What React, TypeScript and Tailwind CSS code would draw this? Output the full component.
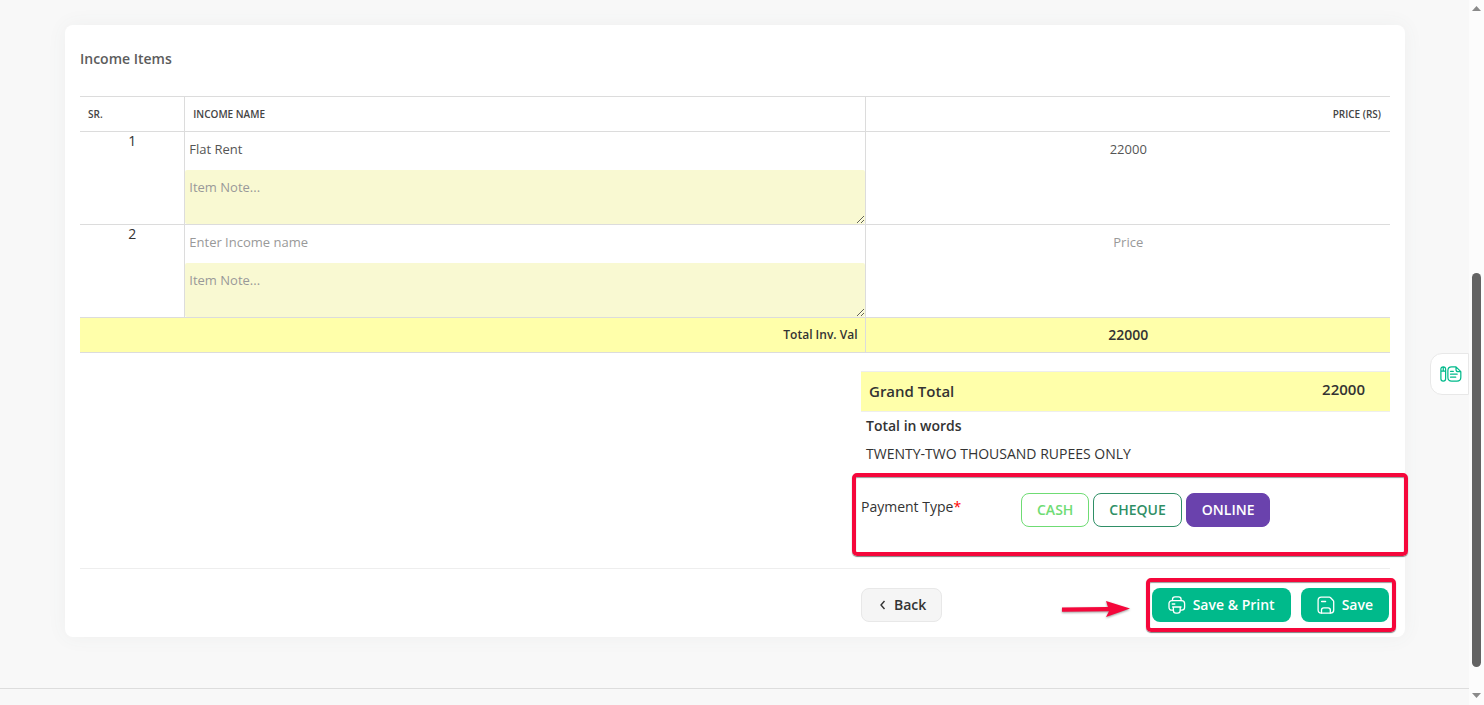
import React, { useState } from 'react';
import clsx from 'clsx';

interface IncomeItem {
  id: number;
  name: string;
  note: string;
  price: string;
}

const PAYMENT_TYPES = [
  { id: 'CASH', outline: 'border-[#6fdc74] text-[#6fdc74]' },
  { id: 'CHEQUE', outline: 'border-[#2f8f66] text-[#2f8f66]' },
  { id: 'ONLINE', outline: 'border-[#6a42ad] text-[#6a42ad]' },
];

function PrintIcon() {
  return (
    <svg width="18" height="18" viewBox="0 0 18 18" fill="none" stroke="currentColor" strokeWidth="1.3" strokeLinecap="round" strokeLinejoin="round" aria-hidden="true">
      <path d="M4.500 4.600V3.400C4.500 1.800 5.400.8 7 .8h3.600c1.600 0 2.500 1 2.500 2.600v1.200" />
      <path d="M5.200 14.200H4C2.100 14.200 1 13.200 1 11.300V7.600c0-1.900 1.100-2.900 3-2.900h9.600c1.900 0 3 1 3 2.900v3.700c0 1.900-1.100 2.900-3 2.900h-1.200" />
      <path d="M4.600 11h8.400M5.400 11v3.600c0 1.700.9 2.600 2.600 2.600h1.600c1.700 0 2.600-.9 2.600-2.600V11M4.200 8h2.600" />
    </svg>
  );
}

function SaveIcon() {
  return (
    <svg width="18" height="18" viewBox="0 0 18 18" fill="none" stroke="currentColor" strokeWidth="1.3" strokeLinecap="round" strokeLinejoin="round" aria-hidden="true">
      <path d="M4.200 1.200h8.200c.5 0 .9.200 1.200.5l2.600 2.800c.3.300.5.700.5 1.200V14c0 2-1.100 3.100-3.100 3.100H4.200c-2 0-3.100-1.100-3.100-3.100V4.300c0-2 1.100-3.100 3.100-3.100z" />
      <path d="M4.500 17v-3c0-1.500.8-2.200 2.200-2.200h4.400c1.400 0 2.200.7 2.200 2.200v3M4.600 5.500h4" />
    </svg>
  );
}

function NotesIcon() {
  return (
    <svg width="22" height="17" viewBox="0 0 23 18" fill="none" stroke="currentColor" strokeWidth="1.3" strokeLinecap="round" strokeLinejoin="round" aria-hidden="true">
      <path d="M.8 3.400C.8 1.800 1.700.9 3.300.9s2.500.9 2.500 2.500v10.200c0 1.600-.9 2.500-2.500 2.500S.8 15.200.8 13.600zM.8 5.400h5M3.300 1v4.400" />
      <path d="M16.800.9h-4.600C9.400.9 8.200 2.100 8.200 5v7c0 2.900 1.200 4.100 4 4.100h5.600c2.900 0 4.100-1.200 4.100-4.100V6zM16.800.9v2.700c0 1.700.7 2.400 2.400 2.400h2.700M11 5.600h3M11 8.700h7M11 11.800h5.500" />
    </svg>
  );
}

// Callout frame drawn over the area it belongs to
function Highlight({ className }: { className: string }) {
  return <div className={clsx('pointer-events-none absolute rounded-[5px] border-4 border-[#f5073b] shadow-[0_1px_1px_rgba(0,0,0,0.5),inset_0_1px_1px_rgba(0,0,0,0.4)]', className)} />;
}

function ItemRow({ item, onChange }: { key?: React.Key; item: IncomeItem; onChange: (patch: Partial<IncomeItem>) => void }) {
  return (
    <tr className="border-b border-[#dcdcdc] align-top">
      <td className="border-r border-[#dcdcdc] text-center text-sm leading-[18px] text-[#333]">{item.id}</td>
      <td className="border-r border-[#dcdcdc]">
        <input
          type="text"
          aria-label="Income name"
          value={item.name}
          onChange={(e) => onChange({ name: e.target.value })}
          placeholder="Enter Income name"
          className="block h-[38px] w-full px-1 pb-1 text-[13px] text-[#555] placeholder:text-[#999] focus:outline-none"
        />
        <textarea
          aria-label="Item note"
          value={item.note}
          onChange={(e) => onChange({ note: e.target.value })}
          placeholder="Item Note..."
          className="block h-[54px] w-full resize-y rounded-xs bg-[#f9f9d2] px-1 py-[7px] text-[13px] leading-5 text-[#555] placeholder:text-[#999] focus:outline-none"
        />
      </td>
      <td>
        <input
          type="text"
          aria-label="Price"
          value={item.price}
          onChange={(e) => onChange({ price: e.target.value })}
          placeholder="Price"
          className="block h-[38px] w-full px-1 pb-1 text-center text-[13px] text-[#555] placeholder:text-[#999] focus:outline-none"
        />
      </td>
    </tr>
  );
}

export default function App() {
  const [items, setItems] = useState<IncomeItem[]>([
    { id: 1, name: 'Flat Rent', note: '', price: '22000' },
    { id: 2, name: '', note: '', price: '' },
  ]);
  const [paymentType, setPaymentType] = useState('ONLINE');

  const total = items.reduce((sum, item) => sum + (Number(item.price) || 0), 0);

  const updateItem = (id: number, patch: Partial<IncomeItem>) => {
    setItems(items.map(item => (item.id === id ? { ...item, ...patch } : item)));
  };

  return (
    <div className="flex min-h-screen bg-[#f8f8f8] font-['Open_Sans',sans-serif] text-[#333]">
      <main className="flex min-w-0 flex-1 flex-col pt-[25px]">
        <section className="mr-16 ml-[65px] rounded-lg bg-white p-[15px] shadow-[0_0_20px_rgba(80,110,100,0.06)]">
          <h2 className="mb-[19px] text-sm leading-[37px] font-semibold text-[#5c5c5c]">Income Items</h2>

          <table className="w-full table-fixed border-collapse">
            <thead>
              <tr className="h-[35px] border-y border-[#dcdcdc] text-[10px] text-[#444]">
                <th className="w-[8%] border-r border-[#dcdcdc] px-2 text-left font-semibold">SR.</th>
                <th className="w-[52%] border-r border-[#dcdcdc] px-2 text-left font-semibold">INCOME NAME</th>
                <th className="w-[40%] px-[9px] text-right font-semibold">PRICE (RS)</th>
              </tr>
            </thead>
            <tbody>
              {items.map(item => (
                <ItemRow key={item.id} item={item} onChange={(patch) => updateItem(item.id, patch)} />
              ))}
            </tbody>
            <tfoot>
              <tr className="h-[35px] border-b border-[#dcdcdc] bg-[#ffffaa]">
                <td colSpan={2} className="border-r border-[#dcdcdc] px-2 text-right text-xs font-semibold">Total Inv. Val</td>
                <td className="text-center text-sm font-semibold">{total}</td>
              </tr>
            </tfoot>
          </table>

          <div className="mt-[18px] ml-auto w-[529px] max-w-full">
            <div className="flex h-[41px] items-center justify-between border-y border-[#eee] bg-[#ffffaa] pr-[25px] pl-2 text-[15px] font-semibold">
              <span>Grand Total</span>
              <span className="pb-1">{total}</span>
            </div>
            <div className="px-[5px] text-sm leading-7">
              <p className="font-semibold">Total in words</p>
              <p>TWENTY-TWO THOUSAND RUPEES ONLY</p>
            </div>
            <div className="relative flex items-start pt-[25px] pb-[41px] text-sm">
              <span id="payment-type" className="w-40 leading-7">
                Payment Type<span className="text-[#f00]">*</span>
              </span>
              <div role="group" aria-labelledby="payment-type" className="flex gap-1">
                {PAYMENT_TYPES.map(type => (
                  <button
                    key={type.id}
                    type="button"
                    aria-pressed={paymentType === type.id}
                    onClick={() => setPaymentType(type.id)}
                    className={clsx(
                      'h-[34px] rounded-lg border px-[15px] font-semibold',
                      paymentType === type.id ? 'border-[#6a42ad] bg-[#6a42ad] text-white' : type.outline
                    )}
                  >
                    {type.id}
                  </button>
                ))}
              </div>
              <Highlight className="top-[5px] -right-[18px] bottom-3 -left-[9px]" />
            </div>
          </div>

          <div className="border-t border-[#eee] pt-[19px]">
            <div className="ml-auto flex w-[529px] max-w-full items-center justify-between pr-px text-sm font-semibold">
              <button type="button" className="flex h-[34px] items-center gap-[7px] rounded-lg border border-[#e8e8e8] bg-[#f5f5f5] px-[15px]">
                <svg width="10" height="10" viewBox="0 0 10 10" fill="none" stroke="currentColor" strokeWidth="1.400" aria-hidden="true">
                  <path d="M7.500 1 4 5l3.500 4" />
                </svg>
                Back
              </button>
              <div className="relative flex gap-[10px] text-white">
                <button type="button" className="flex h-[34px] items-center gap-[7px] rounded-lg bg-[#00ba8b] px-4">
                  <PrintIcon />
                  Save &amp; Print
                </button>
                <button type="button" className="flex h-[34px] items-center gap-[7px] rounded-lg bg-[#00ba8b] px-4">
                  <SaveIcon />
                  Save
                </button>
                <Highlight className="-top-[10px] -right-[7px] -bottom-[10px] -left-[6px]" />
                <svg width="70" height="20" viewBox="0 0 70 20" className="pointer-events-none absolute top-3 right-full mr-5 drop-shadow-[0_1px_1px_rgba(0,0,0,0.4)]" aria-hidden="true">
                  <path d="M0 7.500 46 7 44 1 68 8.500 44 17 47 11.200 0 11.700z" fill="#f5073b" />
                </svg>
              </div>
            </div>
          </div>
        </section>
        <div className="mt-[51px] border-t border-[#ddd]" />
      </main>

      <div className="w-[15px] shrink-0 bg-[#fcfcfc]" />
      <div className="fixed inset-y-0 right-0 flex w-[15px] flex-col items-center pt-[6px] pb-[7px]" aria-hidden="true">
        <svg width="9" height="5" viewBox="0 0 9 5" className="fill-[#8a8a8a]">
          <path d="M0 5 4.500 0 9 5z" />
        </svg>
        <div className="mt-auto h-[57%] w-[9px] rounded-full bg-[#636363]" />
        <svg width="9" height="5" viewBox="0 0 9 5" className="mt-[26px] fill-[#8a8a8a]">
          <path d="M0 0 4.500 5 9 0z" />
        </svg>
      </div>

      <button type="button" aria-label="Notes" className="fixed top-1/2 right-[15px] flex h-[42px] w-[39px] items-center justify-center rounded-l-xl border border-[#e8e8e8] bg-white pt-[2px] pl-[2px] text-[#00ba8b]">
        <NotesIcon />
      </button>
    </div>
  );
}
